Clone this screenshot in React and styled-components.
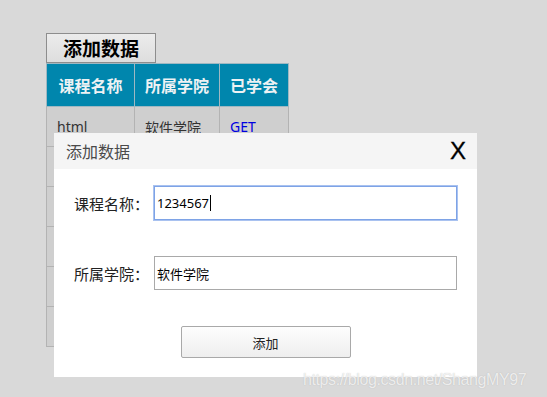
import React from "react";
import styled, { createGlobalStyle } from "styled-components";

const GlobalStyle = createGlobalStyle`
  html, body {
    margin: 0;
    padding: 0;
    background: #d9d9d9;
    font-family: "Noto Sans", "Noto Sans CJK SC", sans-serif;
  }
`;

const rows = [
  { name: "html", college: "软件学院", learned: "GET" },
  { name: "", college: "", learned: "" },
  { name: "", college: "", learned: "" },
  { name: "", college: "", learned: "" },
  { name: "", college: "", learned: "" },
  { name: "", college: "", learned: "" },
];

function App() {
  return (
    <Page>
      <GlobalStyle />
      <AddDataButton>添加数据</AddDataButton>
      <Table>
        <thead>
          <tr>
            <HeadCell width={88}>课程名称</HeadCell>
            <HeadCell width={85}>所属学院</HeadCell>
            <HeadCell width={69}>已学会</HeadCell>
          </tr>
        </thead>
        <tbody>
          {rows.map((r, i) => (
            <tr key={i}>
              <Cell>{r.name}</Cell>
              <Cell>{r.college}</Cell>
              <Cell link>{r.learned}</Cell>
            </tr>
          ))}
        </tbody>
      </Table>

      <Modal>
        <ModalHeader>
          <ModalTitle>添加数据</ModalTitle>
          <CloseButton>X</CloseButton>
        </ModalHeader>
        <ModalBody>
          <FormRow>
            <Label>课程名称：</Label>
            <Input focused>
              1234567<Caret />
            </Input>
          </FormRow>
          <FormRow>
            <Label>所属学院：</Label>
            <Input>软件学院</Input>
          </FormRow>
          <SubmitRow>
            <SubmitButton>添加</SubmitButton>
          </SubmitRow>
        </ModalBody>
      </Modal>

      <Watermark>https://blog.csdn.net/ShangMY97</Watermark>
    </Page>
  );
}

export default App;

const Page = styled.div`
  position: relative;
  width: 547px;
  height: 397px;
  padding: 33px 0 0 46px;
  box-sizing: border-box;
  overflow: hidden;
`;

const AddDataButton = styled.button`
  display: block;
  width: 110px;
  height: 30px;
  padding: 0;
  border: 1px solid #8d8d8d;
  background: linear-gradient(#ececec, #dedede);
  font-family: "Noto Sans CJK SC", sans-serif;
  font-weight: bold;
  font-size: 19px;
  line-height: 28px;
  color: #000;
`;

const Table = styled.table`
  border-collapse: collapse;
  table-layout: fixed;
  width: 243px;
  border: 1px solid #b3b3b3;
`;

const HeadCell = styled.th`
  width: ${(p) => p.width}px;
  height: 43px;
  padding: 0;
  box-sizing: border-box;
  background: #0086ad;
  border: 1px solid #9fb8c2;
  color: #eef2f4;
  font-family: "Noto Sans CJK SC", sans-serif;
  font-weight: bold;
  font-size: 16px;
  text-align: center;
`;

const Cell = styled.td`
  height: 40px;
  padding: 0 0 0 10px;
  box-sizing: border-box;
  background: #cfcfcf;
  border: 1px solid #b3b3b3;
  font-size: 14px;
  color: ${(p) => (p.link ? "#0000e0" : "#333")};
`;

const Modal = styled.div`
  position: absolute;
  left: 54px;
  top: 133px;
  width: 423px;
  height: 244px;
  background: #fff;
  display: flex;
  flex-direction: column;
`;

const ModalHeader = styled.div`
  height: 36px;
  background: #f5f5f5;
  display: flex;
  align-items: center;
  justify-content: space-between;
  padding: 0 11px 0 12px;
`;

const ModalTitle = styled.div`
  font-family: "Noto Sans CJK SC", sans-serif;
  font-size: 16px;
  color: #4a4a4a;
`;

const CloseButton = styled.div`
  font-family: "Liberation Sans", sans-serif;
  font-size: 24px;
  color: #000;
  line-height: 1;
  -webkit-text-stroke: 0.3px #000;
`;

const ModalBody = styled.div`
  padding: 17px 20px 0 20px;
  display: flex;
  flex-direction: column;
  gap: 36px;
`;

const FormRow = styled.div`
  display: flex;
  align-items: center;
`;

const Label = styled.div`
  width: 80px;
  font-family: "Noto Sans CJK SC", sans-serif;
  font-size: 15px;
  color: #222;
`;

const Input = styled.div`
  width: 303px;
  height: 34px;
  box-sizing: border-box;
  border: 1px solid ${(p) => (p.focused ? "#7ea3e6" : "#a9a9a9")};
  box-shadow: ${(p) => (p.focused ? "0 0 0 1px #a9c2f0" : "none")};
  display: flex;
  align-items: center;
  padding-left: 2px;
  font-family: "Noto Sans", "Noto Sans CJK SC", sans-serif;
  font-size: 13px;
  color: #000;
`;

const Caret = styled.span`
  display: inline-block;
  width: 1px;
  height: 16px;
  background: #000;
  margin-left: 1px;
`;

const SubmitRow = styled.div`
  display: flex;
  justify-content: center;
`;

const SubmitButton = styled.button`
  width: 170px;
  height: 32px;
  border: 1px solid #a9a9a9;
  border-radius: 2px;
  background: linear-gradient(#fdfdfd, #eeeeee);
  font-family: "Noto Sans CJK SC", sans-serif;
  font-size: 13px;
  color: #222;
`;

const Watermark = styled.div`
  position: absolute;
  left: 303px;
  top: 371px;
  font-family: "Liberation Sans", sans-serif;
  font-size: 16px;
  letter-spacing: -0.4px;
  white-space: nowrap;
  color: rgba(255, 255, 255, 0.75);
  text-shadow: 0 0 1px rgba(150, 150, 150, 0.6);
`;
